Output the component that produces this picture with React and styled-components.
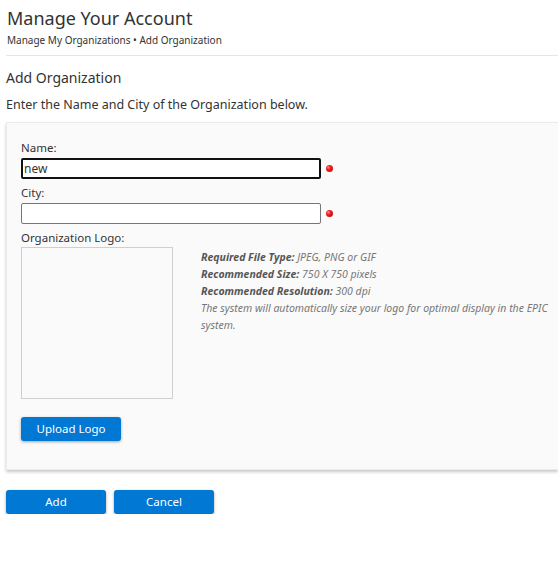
import React from "react";
import styled, { createGlobalStyle } from "styled-components";

const Global = createGlobalStyle`
  html, body { margin: 0; padding: 0; background: #fff; overflow: hidden; }
  body { font-family: "Segoe UI", "Noto Sans", "Open Sans", sans-serif; color: #333; }
  * { box-sizing: border-box; }
`;

const Page = styled.div`
  padding: 0 0 0 6px;
`;

const Header = styled.header`
  padding: 5px 0 7px 1px;
  border-bottom: 1px solid #e5e5e5;
`;

const Title = styled.h1`
  margin: 0;
  font-size: 18px;
  font-weight: 400;
  line-height: 26px;
  color: #333;
`;

const Crumbs = styled.div`
  font-size: 10px;
  line-height: 16px;
  color: #333;
  margin-top: 1px;
`;

const SectionTitle = styled.h2`
  margin: 12px 0 0;
  font-size: 14px;
  font-weight: 400;
  line-height: 20px;
  color: #333;
`;

const Intro = styled.p`
  margin: 8px 0 0;
  font-size: 12.5px;
  line-height: 18px;
  color: #333;
`;

const Panel = styled.section`
  margin-top: 8px;
  background: #fafafa;
  border: 1px solid #ebebeb;
  border-right: none;
  box-shadow: 0 2px 3px rgba(0, 0, 0, 0.22);
  padding: 17px 0 28px 14px;
`;

const Label = styled.label`
  display: block;
  font-size: 11.5px;
  line-height: 15px;
  color: #333;
  margin-top: ${(p) => p.$mt || 0}px;
`;

const FieldRow = styled.div`
  display: flex;
  align-items: center;
  gap: 5px;
  margin-top: 3px;
`;

const Input = styled.input`
  width: 300px;
  height: 21px;
  border: ${(p) => (p.$focused ? "2px solid #111" : "1px solid #767676")};
  border-radius: 2px;
  background: #fff;
  font-family: inherit;
  font-size: 12px;
  color: #333;
  padding: 0 ${(p) => (p.$focused ? 1 : 2)}px;
  outline: none;
`;

const Required = styled.span`
  width: 7px;
  height: 7px;
  border-radius: 50%;
  background: radial-gradient(circle at 35% 35%, #ff8a8a 0, #f01c1c 35%, #b80000 100%);
`;

const LogoRow = styled.div`
  display: flex;
  gap: 28px;
  margin-top: 2px;
`;

const LogoBox = styled.div`
  width: 152px;
  height: 152px;
  border: 1px solid #cfcfcf;
  background: #fafafa;
  flex: none;
`;

const Help = styled.div`
  padding-top: 2px;
  font-size: 10.5px;
  line-height: 17px;
  font-style: italic;
  color: #777;
  max-width: 365px;
`;

const HelpLine = styled.div``;

const Strong = styled.b`
  color: #555;
  font-weight: 700;
`;

const Button = styled.button`
  width: 100px;
  height: 24px;
  border: none;
  border-radius: 3px;
  background: #0078d4;
  color: #fff;
  font-family: inherit;
  font-size: 11.5px;
  box-shadow: 0 1px 3px rgba(0, 0, 0, 0.35);
  cursor: pointer;
  padding: 0;
`;

const UploadWrap = styled.div`
  margin-top: 17px;
`;

const Actions = styled.div`
  display: flex;
  gap: 8px;
  margin-top: 20px;
`;

export default function App() {
  return (
    <>
      <Global />
      <Page>
        <Header>
          <Title>Manage Your Account</Title>
          <Crumbs>Manage My Organizations • Add Organization</Crumbs>
        </Header>
        <SectionTitle>Add Organization</SectionTitle>
        <Intro>Enter the Name and City of the Organization below.</Intro>
        <Panel>
          <Label>Name:</Label>
          <FieldRow>
            <Input $focused defaultValue="new" />
            <Required />
          </FieldRow>
          <Label $mt={6}>City:</Label>
          <FieldRow>
            <Input />
            <Required />
          </FieldRow>
          <Label $mt={6}>Organization Logo:</Label>
          <LogoRow>
            <LogoBox />
            <Help>
              <HelpLine><Strong>Required File Type:</Strong> JPEG, PNG or GIF</HelpLine>
              <HelpLine><Strong>Recommended Size:</Strong> 750 X 750 pixels</HelpLine>
              <HelpLine><Strong>Recommended Resolution:</Strong> 300 dpi</HelpLine>
              <HelpLine>The system will automatically size your logo for optimal display in the EPIC system.</HelpLine>
            </Help>
          </LogoRow>
          <UploadWrap>
            <Button>Upload Logo</Button>
          </UploadWrap>
        </Panel>
        <Actions>
          <Button>Add</Button>
          <Button>Cancel</Button>
        </Actions>
      </Page>
    </>
  );
}
